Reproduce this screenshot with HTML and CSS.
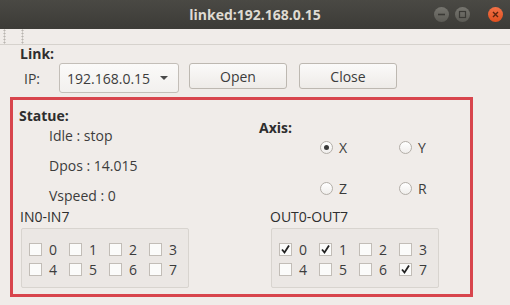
FILE: index.html
```html
<!DOCTYPE html>
<html>
    <head>
        <title>linked:192.168.0.15</title>
        <link rel="stylesheet" href="styles.css">
    </head>
    <body>
        <div class="titleBar">
            <span></span>
            <span class="title">linked:192.168.0.15</span>
            <div class="controls">
                <span class="ctl">
                    <svg width="15" height="15" viewBox="0 0 15 15"><path d="M4 7.5h7" stroke="#3a3935" stroke-width="1.6"/></svg>
                </span>
                <span class="ctl">
                    <svg width="15" height="15" viewBox="0 0 15 15"><rect x="4.5" y="4.5" width="6" height="6" fill="none" stroke="#3a3935" stroke-width="1.2"/></svg>
                </span>
                <span class="ctl close">
                    <svg width="15" height="15" viewBox="0 0 15 15"><path d="M5 5l5 5M10 5l-5 5" stroke="#5a2510" stroke-width="1.4"/></svg>
                </span>
            </div>
        </div>

        <div class="toolBar"><span class="grip"></span><span class="grip"></span></div>

        <div class="link">
            <div class="bold">Link:</div>
            <div class="ipRow">
                <span class="ipLabel">IP:</span>
                <div class="combo">192.168.0.15<span class="arrow"></span></div>
                <button class="btn open">Open</button>
                <button class="btn close">Close</button>
            </div>
        </div>

        <div class="panel">
            <div class="topRow">
                <div class="status">
                    <div class="bold">Statue:</div>
                    <div class="value first">Idle : stop</div>
                    <div class="value">Dpos : 14.015</div>
                    <div class="value">Vspeed : 0</div>
                </div>
                <div class="axis">
                    <div class="bold">Axis:</div>
                    <div class="radios">
                        <label class="radio"><span class="dot checked"></span>X</label>
                        <label class="radio"><span class="dot"></span>Y</label>
                        <label class="radio"><span class="dot"></span>Z</label>
                        <label class="radio"><span class="dot"></span>R</label>
                    </div>
                </div>
            </div>

            <div class="ioRow">
                <div class="io">
                    <div class="ioLabel">IN0-IN7</div>
                    <div class="group">
                        <span class="check"><span class="box"></span>0</span>
                        <span class="check"><span class="box"></span>1</span>
                        <span class="check"><span class="box"></span>2</span>
                        <span class="check"><span class="box"></span>3</span>
                        <span class="check"><span class="box"></span>4</span>
                        <span class="check"><span class="box"></span>5</span>
                        <span class="check"><span class="box"></span>6</span>
                        <span class="check"><span class="box"></span>7</span>
                    </div>
                </div>
                <div class="io">
                    <div class="ioLabel">OUT0-OUT7</div>
                    <div class="group">
                        <span class="check"><span class="box"><svg width="11" height="11" viewBox="0 0 11 11"><path d="M2 5.5l2.5 3L9 1.5" fill="none" stroke="#222" stroke-width="1.8"/></svg></span>0</span>
                        <span class="check"><span class="box"><svg width="11" height="11" viewBox="0 0 11 11"><path d="M2 5.5l2.5 3L9 1.5" fill="none" stroke="#222" stroke-width="1.8"/></svg></span>1</span>
                        <span class="check"><span class="box"></span>2</span>
                        <span class="check"><span class="box"></span>3</span>
                        <span class="check"><span class="box"></span>4</span>
                        <span class="check"><span class="box"></span>5</span>
                        <span class="check"><span class="box"></span>6</span>
                        <span class="check"><span class="box"><svg width="11" height="11" viewBox="0 0 11 11"><path d="M2 5.5l2.5 3L9 1.5" fill="none" stroke="#222" stroke-width="1.8"/></svg></span>7</span>
                    </div>
                </div>
            </div>
        </div>
    </body>
</html>
```

FILE: styles.css
```css
body{
    margin: 0;
    background: #f0ece9;
    color: #3c3c3c;
    font-family: "Open Sans", "DejaVu Sans", sans-serif;
    font-size: 14px;
    line-height: 17px;
    width: 510px;
    height: 305px;
    overflow: hidden;
}
.bold{
    font-weight: bold;
    color: #2e2e2e;
}

.titleBar{
    height: 29px;
    background: linear-gradient(#4a4944, #3c3b37);
    display: grid;
    grid-template-columns: 1fr auto 1fr;
    align-items: center;
}
.title{
    color: #dfdbd2;
    font-weight: bold;
    font-size: 14px;
}
.controls{
    justify-self: end;
    display: flex;
    gap: 6px;
    padding-right: 7px;
}
.ctl{
    width: 15px;
    height: 15px;
    border-radius: 50%;
    background: linear-gradient(#76756f, #5c5b55);
    display: flex;
}
.ctl.close{
    background: linear-gradient(#f27147, #e0501f);
}

.toolBar{
    height: 15px;
    border-bottom: 1px solid #d6d2cd;
    display: flex;
    gap: 15px;
    padding-left: 3px;
}
.grip{
    width: 3px;
    height: 15px;
    background-image: radial-gradient(#b9b5b0 45%, transparent 50%);
    background-size: 3px 3px;
}

.link{
    padding-left: 20px;
}
.ipRow{
    display: flex;
    align-items: flex-start;
    margin-top: 1px;
}
.ipLabel{
    padding-left: 4px;
    width: 35px;
    margin-top: 7px;
}
.combo{
    width: 120px;
    height: 30px;
    box-sizing: border-box;
    border: 1px solid #c3beb8;
    border-radius: 3px;
    background: linear-gradient(#fbfaf9, #f2f0ee);
    display: flex;
    align-items: center;
    padding-left: 7px;
    padding-right: 10px;
    justify-content: space-between;
}
.arrow{
    width: 0;
    height: 0;
    border-left: 4px solid transparent;
    border-right: 4px solid transparent;
    border-top: 4px solid #4a4a4a;
}
.btn{
    width: 98px;
    height: 26px;
    border: 1px solid #bdb8b1;
    border-radius: 3px;
    background: linear-gradient(#fbfaf9, #eeebe8);
    font-family: inherit;
    font-size: 14px;
    color: #3c3c3c;
    padding: 0;
}
.open{
    margin-left: 10px;
}
.close{
    margin-left: 12px;
}

.panel{
    margin-left: 10px;
    margin-top: 4px;
    width: 463px;
    height: 200px;
    box-sizing: border-box;
    border: 3px solid #d8454d;
}
.topRow{
    display: flex;
}
.status{
    flex: none;
    width: 240px;
    padding-left: 6px;
    padding-top: 7px;
}
.status .value{
    padding-left: 30px;
    margin-top: 13px;
}
.status .value.first{
    margin-top: 3px;
}
.axis{
    padding-top: 19px;
}
.radios{
    display: grid;
    grid-template-columns: 79px auto;
    row-gap: 24px;
    padding-left: 61px;
    margin-top: 3px;
}
.radio{
    display: flex;
    align-items: center;
    gap: 6px;
}
.dot{
    width: 13px;
    height: 13px;
    box-sizing: border-box;
    border-radius: 50%;
    border: 1px solid #b3aea8;
    background: linear-gradient(#ffffff, #f0eeec);
    display: flex;
    align-items: center;
    justify-content: center;
}
.dot.checked::after{
    content: "";
    width: 5px;
    height: 5px;
    border-radius: 50%;
    background: #3a3a3a;
}

.ioRow{
    display: flex;
    margin-top: 4px;
    padding-left: 7px;
}
.io{
    flex: none;
    width: 250px;
}
.io + .io{
    width: auto;
}
.ioLabel{
    color: #2e2e2e;
}
.group{
    margin-left: 1px;
    margin-top: 3px;
    width: 168px;
    height: 60px;
    box-sizing: border-box;
    border: 1px solid #d8d4cf;
    border-radius: 2px;
    background: #ebe7e4;
    padding: 10px 0 0 7px;
    display: grid;
    grid-template-columns: repeat(4, 40px);
    grid-auto-rows: 20px;
}
.check{
    display: flex;
    align-items: center;
    gap: 7px;
}
.box{
    width: 13px;
    height: 13px;
    box-sizing: border-box;
    border: 1px solid #c2bdb7;
    background: #fbfbfa;
    display: flex;
    align-items: center;
    justify-content: center;
}
```
